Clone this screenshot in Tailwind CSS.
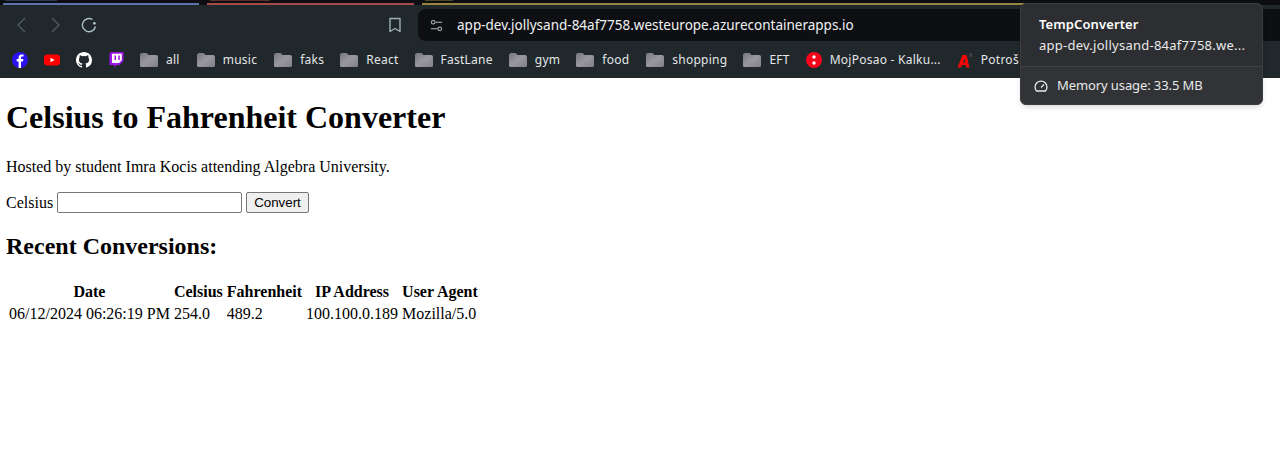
<!DOCTYPE html>
<html lang="en">
<head>
  <meta charset="UTF-8" />
  <title>TempConverter</title>
  <script src="https://cdn.jsdelivr.net/npm/@tailwindcss/browser@4"></script>
</head>
<body class="bg-white h-[454px] overflow-hidden font-['Liberation_Serif',serif] text-[16px] text-black">
  <!-- shared folder fill -->
  <svg class="absolute w-0 h-0">
    <defs>
      <linearGradient id="folderFill" x1="0" y1="0" x2="1" y2="1">
        <stop offset="0" stop-color="#77777c"/>
        <stop offset="0.5" stop-color="#98989e"/>
        <stop offset="1" stop-color="#808086"/>
      </linearGradient>
    </defs>
  </svg>

  <!-- browser chrome -->
  <div class="h-[78px] bg-[#20282c] font-['Noto_Sans',sans-serif] text-[12px] text-[#e4e6e8]">
    <!-- tab strip -->
    <div class="h-[5px] bg-[#0c0e11] flex pl-[3px]">
      <div class="w-[196px] flex flex-col justify-between">
        <div class="w-[52px] ml-[2px] h-[1px] bg-[#2b3652]"></div>
        <div class="h-[2px] bg-[#5d74ab]"></div>
      </div>
      <div class="w-[207px] ml-[8px] flex flex-col justify-between">
        <div class="w-[60px] ml-[3px] h-[1px] bg-[#5a2f32]"></div>
        <div class="h-[2px] bg-[#a8494c]"></div>
      </div>
      <div class="w-[680px] ml-[8px] flex flex-col justify-between">
        <div class="w-[28px] ml-[3px] h-[1px] bg-[#4d4526]"></div>
        <div class="h-[2px] bg-[#97863f]"></div>
      </div>
    </div>
    <!-- toolbar -->
    <div class="h-[37px] pt-[3px] flex items-center">
      <div class="flex items-center gap-[10px] pl-[11px] w-[385px]">
        <svg class="w-5 h-5" viewBox="0 0 20 20" fill="none" stroke="#4e5a62" stroke-width="1.4"><path d="M14 3 L7 10 L14 17"/></svg>
        <svg class="w-5 h-5 ml-[4px]" viewBox="0 0 20 20" fill="none" stroke="#4e5a62" stroke-width="1.4"><path d="M7 3 L14 10 L7 17"/></svg>
        <svg class="w-5 h-5 ml-[4px]" viewBox="0 0 20 20" fill="none" stroke="#a9c0ca" stroke-width="1.4"><path d="M13.5 4.5 A6.6 6.6 0 1 0 16.4 11.5"/><circle cx="15.4" cy="8.3" r="1.4" fill="#a9c0ca" stroke="none"/></svg>
      </div>
      <svg class="w-[20px] h-[20px]" viewBox="0 0 20 20" fill="none" stroke="#9fb0b8" stroke-width="1.4"><path d="M5 3.5 H15 V16.5 L10 13.5 L5 16.5 Z" stroke-linejoin="round"/></svg>
      <div class="ml-[13px] flex-1 h-[32px] bg-[#0d0f13] rounded-l-[8px] flex items-center pl-[12px] text-[13.5px] text-[#f0f1f2]">
        <svg class="w-[13px] h-[13px] shrink-0" viewBox="0 0 14 14" fill="none" stroke="#b6bbbf" stroke-width="1.1"><circle cx="3.5" cy="3.5" r="2"/><path d="M6 3.5 H13"/><circle cx="10.5" cy="10.5" r="2"/><path d="M1 10.5 H8"/></svg>
        <span class="ml-[14px]">app-dev.jollysand-84af7758.westeurope.azurecontainerapps.io</span>
      </div>
    </div>
    <!-- bookmarks -->
    <div class="h-[36px] flex items-center pl-[12px] whitespace-nowrap tracking-[0.25px]">
      <svg class="w-4 h-4 shrink-0" viewBox="0 0 16 16"><circle cx="8" cy="8" r="8" fill="#2a12ee"/><path d="M9 16 V9.5 H11 L11.4 7 H9 V5.6 C9 4.8 9.4 4.4 10.2 4.4 H11.5 V2.4 H9.8 C7.8 2.4 6.6 3.5 6.6 5.4 V7 H4.7 V9.5 H6.6 V16 Z" fill="#fff"/></svg>
      <svg class="w-4 h-4 shrink-0 ml-[16px]" viewBox="0 0 16 16"><rect y="2.5" width="16" height="11" rx="3" fill="#f00"/><path d="M6.5 5.8 L10.5 8 L6.5 10.2 Z" fill="#fff"/></svg>
      <svg class="w-4 h-4 shrink-0 ml-[16px]" viewBox="0 0 16 16"><path fill="#fff" d="M8 0C3.58 0 0 3.58 0 8c0 3.54 2.29 6.53 5.47 7.59.4.07.55-.17.55-.38v-1.34c-2.23.48-2.7-1.07-2.7-1.07-.36-.92-.89-1.17-.89-1.17-.73-.5.05-.49.05-.49.8.06 1.23.83 1.23.83.72 1.22 1.87.87 2.33.66.07-.52.28-.87.51-1.07-1.78-.2-3.64-.89-3.64-3.95 0-.87.31-1.59.82-2.15-.08-.2-.36-1.02.08-2.12 0 0 .67-.21 2.2.82a7.6 7.6 0 0 1 4 0c1.53-1.04 2.2-.82 2.2-.82.44 1.1.16 1.92.08 2.12.51.56.82 1.27.82 2.15 0 3.07-1.87 3.75-3.65 3.95.29.25.54.73.54 1.48v2.2c0 .21.15.46.55.38A8 8 0 0 0 16 8c0-4.42-3.58-8-8-8z"/></svg>
      <svg class="w-4 h-4 shrink-0 ml-[16px]" viewBox="0 0 16 16"><path fill="#9b14e8" d="M2.5 0 H15.5 V9 L11.5 13 H8.5 L6 15.5 V13 H1.5 V2.5 Z"/><path fill="#fff" d="M4 1.8 H13.8 V8.2 L11 11 H4 Z"/><path fill="#9b14e8" d="M6.5 3.5 H8 V8 H6.5 Z M10.3 3.5 H11.8 V8 H10.3 Z"/></svg>

      <div class="flex items-center ml-[16px]"><svg class="w-[18px] h-[16px] shrink-0" viewBox="0 0 18 16"><path d="M0 3 Q0 1 2 1 H6.5 L8.5 3 H16 Q18 3 18 5 V13.5 Q18 15 16.5 15 H1.5 Q0 15 0 13.5 Z" fill="url(#folderFill)"/></svg><span class="ml-[8px]">all</span></div>
      <div class="flex items-center ml-[17px]"><svg class="w-[18px] h-[16px] shrink-0" viewBox="0 0 18 16"><path d="M0 3 Q0 1 2 1 H6.5 L8.5 3 H16 Q18 3 18 5 V13.5 Q18 15 16.5 15 H1.5 Q0 15 0 13.5 Z" fill="url(#folderFill)"/></svg><span class="ml-[8px]">music</span></div>
      <div class="flex items-center ml-[17px]"><svg class="w-[18px] h-[16px] shrink-0" viewBox="0 0 18 16"><path d="M0 3 Q0 1 2 1 H6.5 L8.5 3 H16 Q18 3 18 5 V13.5 Q18 15 16.5 15 H1.5 Q0 15 0 13.5 Z" fill="url(#folderFill)"/></svg><span class="ml-[8px]">faks</span></div>
      <div class="flex items-center ml-[16px]"><svg class="w-[18px] h-[16px] shrink-0" viewBox="0 0 18 16"><path d="M0 3 Q0 1 2 1 H6.5 L8.5 3 H16 Q18 3 18 5 V13.5 Q18 15 16.5 15 H1.5 Q0 15 0 13.5 Z" fill="url(#folderFill)"/></svg><span class="ml-[8px]">React</span></div>
      <div class="flex items-center ml-[16px]"><svg class="w-[18px] h-[16px] shrink-0" viewBox="0 0 18 16"><path d="M0 3 Q0 1 2 1 H6.5 L8.5 3 H16 Q18 3 18 5 V13.5 Q18 15 16.5 15 H1.5 Q0 15 0 13.5 Z" fill="url(#folderFill)"/></svg><span class="ml-[8px]">FastLane</span></div>
      <div class="flex items-center ml-[16px]"><svg class="w-[18px] h-[16px] shrink-0" viewBox="0 0 18 16"><path d="M0 3 Q0 1 2 1 H6.5 L8.5 3 H16 Q18 3 18 5 V13.5 Q18 15 16.5 15 H1.5 Q0 15 0 13.5 Z" fill="url(#folderFill)"/></svg><span class="ml-[8px]">gym</span></div>
      <div class="flex items-center ml-[16px]"><svg class="w-[18px] h-[16px] shrink-0" viewBox="0 0 18 16"><path d="M0 3 Q0 1 2 1 H6.5 L8.5 3 H16 Q18 3 18 5 V13.5 Q18 15 16.5 15 H1.5 Q0 15 0 13.5 Z" fill="url(#folderFill)"/></svg><span class="ml-[8px]">food</span></div>
      <div class="flex items-center ml-[17px]"><svg class="w-[18px] h-[16px] shrink-0" viewBox="0 0 18 16"><path d="M0 3 Q0 1 2 1 H6.5 L8.5 3 H16 Q18 3 18 5 V13.5 Q18 15 16.5 15 H1.5 Q0 15 0 13.5 Z" fill="url(#folderFill)"/></svg><span class="ml-[8px]">shopping</span></div>
      <div class="flex items-center ml-[16px]"><svg class="w-[18px] h-[16px] shrink-0" viewBox="0 0 18 16"><path d="M0 3 Q0 1 2 1 H6.5 L8.5 3 H16 Q18 3 18 5 V13.5 Q18 15 16.5 15 H1.5 Q0 15 0 13.5 Z" fill="url(#folderFill)"/></svg><span class="ml-[8px]">EFT</span></div>
      <div class="flex items-center ml-[16px]"><svg class="w-4 h-4 shrink-0" viewBox="0 0 16 16"><circle cx="8" cy="8" r="8" fill="#f5051c"/><circle cx="8" cy="5" r="1.7" fill="#fff"/><circle cx="8" cy="11" r="1.7" fill="#fff"/></svg><span class="ml-[8px]">MojPosao - Kalku...</span></div>
      <div class="flex items-center ml-[16px]"><svg class="w-4 h-4 shrink-0" viewBox="0 0 16 16"><path d="M0.5 15.5 L5.5 3 H9.6 L12.5 15.5 H9 L8.6 13 H5 L4 15.5 Z M6 10.5 H8.2 L7.6 6.8 Z" fill="#f00808"/><rect x="12.5" y="1" width="2.5" height="4" fill="#3d3f42"/></svg><span class="ml-[8px]">Potroš</span></div>
    </div>
  </div>

  <!-- tab hover card -->
  <div class="absolute left-[1020px] top-[3px] w-[243px] h-[102px] rounded-[6px] bg-[#2d2e31] border border-[#3c3d40] shadow-md font-['Noto_Sans',sans-serif] text-[13px] text-[#e8e9ea] overflow-hidden">
    <div class="h-[62px] pl-[18px] pt-[10px] leading-[21px]">
      <div class="font-semibold text-white tracking-[0.1px]">TempConverter</div>
      <div class="tracking-[0.25px]">app-dev.jollysand-84af7758.we...</div>
    </div>
    <div class="h-[39px] border-t border-[#3f4043] bg-[#323336] flex items-center pl-[13px]">
      <svg class="w-[14px] h-[14px]" viewBox="0 0 14 14" fill="none" stroke="#e8e9ea" stroke-width="1.3"><path d="M2.5 12 A6 6 0 1 1 11.5 12 Z" stroke-linejoin="round"/><path d="M7 8.5 L10 5.5"/></svg>
      <span class="ml-[9px] tracking-[-0.1px]">Memory usage: 33.5 MB</span>
    </div>
  </div>

  <!-- page -->
  <main class="px-[6px]">
    <h1 class="text-[32px] font-bold leading-[37px] mt-[21px]">Celsius to Fahrenheit Converter</h1>
    <p class="mt-[22px] leading-[18px]">Hosted by student Imra Kocis attending Algebra University.</p>
    <form class="mt-[16px] flex items-center h-[21px]">
      <label>Celsius</label>
      <input type="text" class="ml-[4px] w-[185px] h-[21px] border border-[#767676] rounded-[2px] bg-white" />
      <button type="button" class="ml-[4px] h-[21px] px-[7px] border border-[#767676] rounded-[2px] bg-[#efefef] font-['Liberation_Sans',sans-serif] text-[13.33px]">Convert</button>
    </form>
    <h2 class="text-[24px] font-bold leading-[28px] mt-[19px]">Recent Conversions:</h2>
    <table class="mt-[20px] border-separate border-spacing-[2px] leading-[18px]">
      <thead>
        <tr class="font-bold text-center">
          <th class="p-[1px]">Date</th><th class="p-[1px]">Celsius</th><th class="p-[1px]">Fahrenheit</th><th class="p-[1px]">IP Address</th><th class="p-[1px]">User Agent</th>
        </tr>
      </thead>
      <tbody>
        <tr>
          <td class="p-[1px]">06/12/2024 06:26:19 PM</td><td class="p-[1px]">254.0</td><td class="p-[1px]">489.2</td><td class="p-[1px]">100.100.0.189</td><td class="p-[1px]">Mozilla/5.0</td>
        </tr>
      </tbody>
    </table>
  </main>
</body>
</html>
